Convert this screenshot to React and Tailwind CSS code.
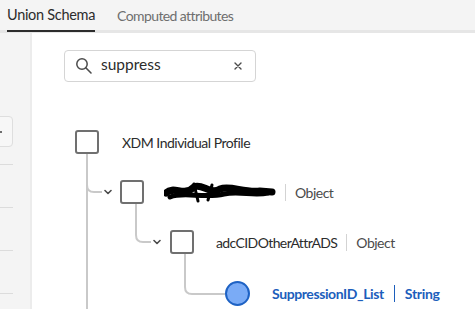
import React from "react";

function Chevron() {
  return (
    <svg width="8" height="6" viewBox="0 0 8 6" className="shrink-0">
      <path d="M1 1.5 L4 4.5 L7 1.5" fill="none" stroke="#4b4b4b" strokeWidth="1.6" strokeLinecap="round" strokeLinejoin="round" />
    </svg>
  );
}

function Box() {
  return <div className="w-[24px] h-[24px] shrink-0 rounded-[3px] border-2 border-[#707070] bg-white" />;
}

function Sep() {
  return <div className="w-px h-[17px] bg-[#d3d3d3] mx-[9px]" />;
}

export default function App() {
  return (
    <div className="w-[475px] h-[309px] overflow-hidden bg-white text-[#2c2c2c] flex flex-col" style={{ fontFamily: "Lato, 'Open Sans', sans-serif" }}>
      {/* header tabs */}
      <div className="h-[30px] bg-[#f4f4f4] flex items-stretch shrink-0">
        <div className="relative ml-[7px] flex items-center text-[14.5px] text-[#2c2c2c] tracking-[-0.3px]">
          Union Schema
          <div className="absolute left-0 right-0 bottom-[-2px] h-[2px] bg-[#2c2c2c]" />
        </div>
        <div className="ml-[22px] flex items-center text-[14px] text-[#6e6e6e] tracking-[-0.6px]">Computed attributes</div>
      </div>
      <div className="h-[3px] bg-[#e6e6e6] shrink-0" />

      <div className="flex flex-1 min-h-0">
        {/* left panel */}
        <div className="w-[32px] shrink-0 bg-[#f4f4f4] border-r-2 border-[#ececec] overflow-hidden flex flex-col">
          <div className="mt-[83px] -ml-[20px] w-[33px] h-[31px] rounded-[4px] border border-[#dedede] bg-[#f7f7f7] flex items-center">
            <div className="ml-[19px] w-[2px] h-[2px] bg-[#6e6e6e]" />
          </div>
          <div className="mt-[17px] w-[13px] h-px bg-[#dcdcdc]" />
          <div className="mt-[42px] w-[13px] h-px bg-[#dcdcdc]" />
          <div className="mt-[42px] w-[13px] h-px bg-[#dcdcdc]" />
          <div className="mt-[42px] w-[13px] h-px bg-[#dcdcdc]" />
        </div>

        {/* main */}
        <div className="flex-1 relative flex flex-col">
          {/* search */}
          <div className="ml-[32px] mt-[17px] w-[192px] h-[32px] rounded-[4px] border border-[#d5d5d5] flex items-center shrink-0">
            <svg width="18" height="18" viewBox="0 0 18 18" className="ml-[10px] shrink-0">
              <circle cx="7" cy="7" r="5.2" fill="none" stroke="#4b4b4b" strokeWidth="1.5" />
              <path d="M10.8 10.8 L16 16" stroke="#4b4b4b" strokeWidth="1.6" strokeLinecap="round" />
            </svg>
            <span className="ml-[8px] text-[15.5px] text-[#2c2c2c] flex-1 leading-none pb-[2px]">suppress</span>
            <svg width="8" height="8" viewBox="0 0 8 8" className="mr-[13px] shrink-0">
              <path d="M1 1 L7 7 M7 1 L1 7" stroke="#4b4b4b" strokeWidth="1.4" strokeLinecap="round" />
            </svg>
          </div>

          {/* tree */}
          <div className="relative mt-[35px] flex flex-col text-[14px] tracking-[-0.5px]">
            <svg className="absolute left-0 top-0" width="443" height="200" viewBox="0 0 443 200">
              <g fill="none" stroke="#c9c9c9" strokeWidth="2">
                <path d="M55 37 V200" />
                <path d="M55 68 Q55 75 62 75 H70" />
                <path d="M104 87 V118 Q104 125 111 125 H119" />
                <path d="M153 137 V170 Q153 177 160 177 H193" />
              </g>
            </svg>

            <div className="relative h-[50px] flex items-center pl-[43px]">
              <Box />
              <span className="ml-[23px]">XDM Individual Profile</span>
            </div>
            <div className="relative h-[50px] flex items-center pl-[72px]">
              <Chevron />
              <div className="ml-[8px]"><Box /></div>
              <svg width="112" height="22" viewBox="0 0 112 22" className="ml-[20px] shrink-0">
                <path d="M2 12 C 10 4, 20 16, 30 6 C 38 2, 46 14, 56 8 C 66 4, 80 12, 96 10 L108 11" fill="none" stroke="#000" strokeWidth="7" strokeLinecap="round" />
                <path d="M6 16 C 20 10, 40 18, 60 13 C 75 10, 90 15, 104 12" fill="none" stroke="#000" strokeWidth="5" strokeLinecap="round" />
                <path d="M30 3 L34 20 M48 4 L44 19" stroke="#000" strokeWidth="3" strokeLinecap="round" />
              </svg>
              <Sep />
              <span className="text-[#4b4b4b]">Object</span>
            </div>
            <div className="relative h-[50px] flex items-center pl-[121px]">
              <Chevron />
              <div className="ml-[9px]"><Box /></div>
              <span className="ml-[22px] tracking-[-0.6px]">adcCIDOtherAttrADS</span>
              <Sep />
              <span className="text-[#4b4b4b]">Object</span>
            </div>
            <div className="relative h-[52px] flex items-center pl-[193px]">
              <div className="w-[25px] h-[25px] rounded-full bg-[#7aabf6] border-2 border-[#1e62c4] shrink-0" />
              <span className="ml-[22px] font-bold text-[#1c5ebc] tracking-[-0.4px]">SuppressionID_List</span>
              <div className="w-px h-[17px] bg-[#1c5ebc] mx-[10px]" />
              <span className="font-bold text-[#1c5ebc] tracking-[-0.3px]">String</span>
            </div>
          </div>
        </div>
      </div>
    </div>
  );
}
